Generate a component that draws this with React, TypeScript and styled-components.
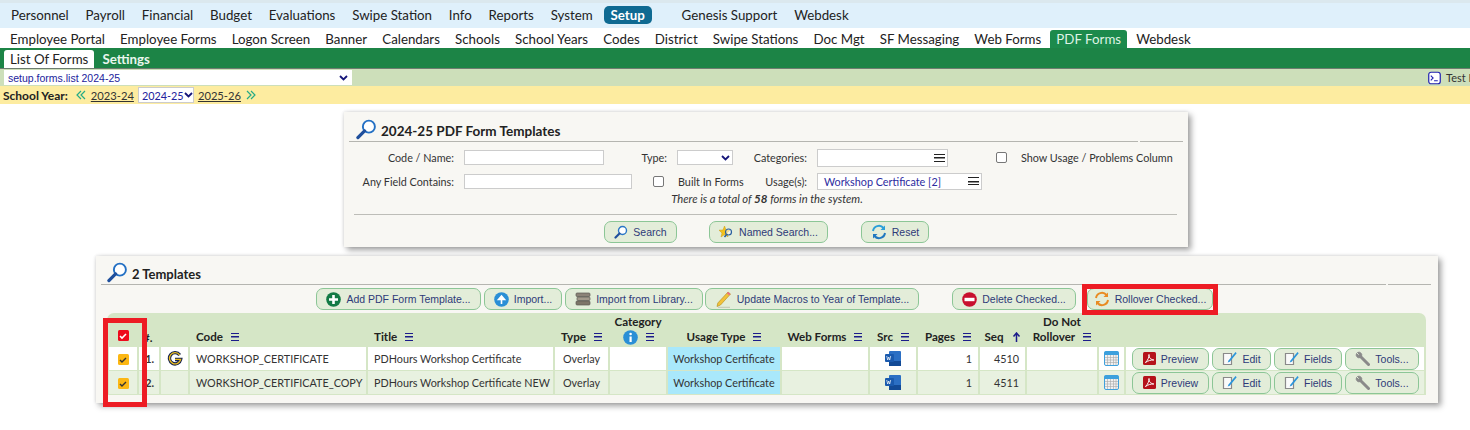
import React from "react";
import styled, { createGlobalStyle } from "styled-components";

const Global = createGlobalStyle`
  html, body { margin: 0; padding: 0; background: #fff; }
  body { font-family: Lato, "Open Sans", sans-serif; color: #222; width: 1470px; height: 430px; overflow: hidden; }
  * { box-sizing: border-box; }
`;

const TopBar = styled.div`
  position: relative; height: 28px; background: #dff0fb; border-top: 3px solid #dbe8ee; overflow: hidden;
  display: flex; align-items: center; padding: 0 0 2px 11px; gap: 16.8px; font-size: 13.3px; color: #222;
`;
const TopItem = styled.span<{ $active?: boolean; $gap?: number }>`
  white-space: nowrap; line-height: 18px;
  ${p => p.$gap ? `margin-left: ${p.$gap}px;` : ""}
  ${p => p.$active ? `background:#0f6a92;color:#fff;border-radius:5px;padding:0 7px;margin:0 -2px 0 -6px;font-weight:700;` : ""}
`;
const DateStub = styled.span`
  position: absolute; right: -15px; top: -11px; font-size: 11px; color: #2b5c8a; white-space: nowrap;
`;
const SubBar = styled.div`
  height: 20px; background: #fff; display: flex; align-items: flex-end; padding-left: 10px; gap: 15.1px; font-size: 13.3px;
`;
const SubItem = styled.span<{ $active?: boolean }>`
  white-space: nowrap; line-height: 18px; height: 18px;
  ${p => p.$active ? `background:#1c8a4c;color:#dff3e5;border-radius:3px 3px 0 0;padding:0 6px;margin:0 -6px;height:18px;` : ""}
`;
const GreenBar = styled.div`
  height: 21px; background: #1c8446; border-bottom: 1px solid #6d7d70; display: flex; align-items: flex-end; padding: 0 0 0 4px; gap: 2px; font-size: 13.3px;
`;
const GreenTab = styled.span<{ $active?: boolean }>`
  height: 18px; line-height: 18px; padding: 0 6px; border-radius: 3px 3px 0 0;
  background: ${p => p.$active ? "#fff" : "transparent"}; color: ${p => p.$active ? "#222" : "#eaf6ee"};
  font-weight: ${p => p.$active ? 400 : 700};
`;
const ContextBar = styled.div`
  height: 17px; background: #cddfba; display: flex; align-items: center; justify-content: space-between; padding-left: 4px;
`;
const ContextSelect = styled.div`
  width: 348px; height: 15px; background: #fff; display: flex; align-items: center; justify-content: space-between;
  padding: 0 4px 0 4px; color: #22229c; font: 10.5px "Liberation Sans", sans-serif;
`;
const TestLink = styled.div`
  display: flex; align-items: center; gap: 5px; font-size: 11px; color: #333; white-space: nowrap; width: 42px; overflow: hidden;
  svg { flex: none; }
`;
const YearBar = styled.div`
  height: 18px; background: #fdeca0; display: flex; align-items: center; padding-left: 3px; font-size: 12px;
`;
const YearLabel = styled.b` font-weight: 700; color: #222; margin-right: 8px; white-space: nowrap; `;
const ChevronBox = styled.span<{ $mx: string }>` display: inline-flex; margin: ${p => p.$mx}; `;
const YearLink = styled.span` text-decoration: underline; font-size: 11.2px; color: #333; white-space: nowrap; `;
const YearSelect = styled.span`
  display: inline-flex; align-items: center; justify-content: space-between; width: 56px; height: 16px; background: #fff; border: 1px solid #ccc;
  color: #22229c; margin: 0 4px; padding: 0 2px 0 3px; font-size: 10.8px; white-space: nowrap;
  svg { flex: none; }
`;

const Panel = styled.section<{ $left: number; $width: number; $top: number; $height: number }>`
  position: relative; margin-left: ${p => p.$left}px; margin-top: ${p => p.$top}px; width: ${p => p.$width}px; height: ${p => p.$height}px;
  background: #f8f7f3; box-shadow: 3px 3px 6px rgba(0,0,0,.38), -1px 0 3px rgba(0,0,0,.06), 0 -1px 3px rgba(0,0,0,.05);
`;
const PanelHead = styled.div<{ $pad: number; $h: number; $mr: number; $ml: number; $fs: number }>`
  position: relative; height: ${p => p.$h}px; padding: 0 0 1px ${p => p.$pad}px; display: flex; align-items: flex-end; gap: 4px;
  font-weight: 700; font-size: ${p => p.$fs}px; color: #222; border-bottom: 1px solid #b5b5b0; margin: 0 ${p => p.$mr}px 0 ${p => p.$ml}px; line-height: 18px;
  &::after { content: ""; position: absolute; right: 43px; bottom: -1px; width: 2px; height: 1px; background: #f8f7f3; }
`;
const FormGrid = styled.div`
  display: grid; grid-template-columns: 120px 179px 34px 56px 84px 179px 1fr; grid-auto-rows: 23.5px; padding: 4px 0 0 0; font-size: 10.8px; color: #333;
  align-items: center;
`;
const FieldLabel = styled.label<{ $pr?: number }>`
  display: flex; justify-content: flex-end; padding-right: ${p => p.$pr ?? 10}px; white-space: nowrap;
`;
const TextBox = styled.div<{ $w: number }>`
  width: ${p => p.$w}px; height: 15px; background: #fff; border: 1px solid #ccc;
`;
const Check = styled.span`
  display: inline-block; width: 11px; height: 11px; border: 1px solid #777; border-radius: 2px; background: #fff; flex: none;
`;
const CheckLabel = styled.span<{ $ml: number; $span?: number }>`
  display: flex; align-items: center; gap: 14px; margin-left: ${p => p.$ml}px; white-space: nowrap;
  ${p => p.$span ? `grid-column: span ${p.$span};` : ""}
`;
const PickBox = styled.div<{ $w: number; $h?: number }>`
  width: ${p => p.$w}px; height: ${p => p.$h ?? 17}px; background: #fff; border: 1px solid #ccc; display: flex; align-items: center; justify-content: space-between;
  padding: 0 2px 0 6px; color: #2c2ca0; white-space: nowrap;
`;
const Burger = styled.span<{ $c?: string; $w?: number }>`
  display: inline-block; width: ${p => p.$w ?? 11}px; height: 8px; flex: none;
  border-top: 1.5px solid ${p => p.$c ?? "#222"}; border-bottom: 1.5px solid ${p => p.$c ?? "#222"};
  background: linear-gradient(${p => p.$c ?? "#222"}, ${p => p.$c ?? "#222"}) center / 100% 1.5px no-repeat;
`;
const TotalLine = styled.div`
  text-align: center; font-style: italic; font-size: 11.2px; color: #333; height: 16px; line-height: 16px; margin: -2px 0 0 2px;
  b { font-weight: 700; font-size: 11.6px; }
`;
const Rule = styled.div` height: 1px; background: #bdbdb8; margin: 7px 11px 0 10px; `;
const ButtonRow = styled.div<{ $pl: number; $mt: number }>`
  display: flex; gap: 2px; padding-left: ${p => p.$pl}px; margin-top: ${p => p.$mt}px; align-items: center;
`;
const Btn = styled.button<{ $w: number; $ml?: number }>`
  width: ${p => p.$w}px; height: 22px; margin-left: ${p => p.$ml ?? 0}px; flex: none;
  display: inline-flex; align-items: center; justify-content: center; gap: 5px; padding: 0 3px; white-space: nowrap;
  background: #e3edd9; border: 1px solid #8cc696; border-radius: 7px; color: #2e3a78;
  font: 10.5px "Liberation Sans", sans-serif;
  svg { flex: none; }
`;
const Frame = styled.div<{ $l: number; $t: number; $w: number; $h: number }>`
  position: absolute; left: ${p => p.$l}px; top: ${p => p.$t}px; width: ${p => p.$w}px; height: ${p => p.$h}px; border: 5px solid #ed1c24; pointer-events: none;
`;
const Table = styled.table`
  table-layout: fixed; width: 1319px; margin: 3px 0 0 11px; border-collapse: separate; border-spacing: 2px 0; background: #d5e6c6; border-radius: 7px 7px 0 0;
  font-size: 10.8px; color: #333;
`;
const Th = styled.th<{ $align?: string; $pl?: number }>`
  height: 34px; vertical-align: bottom; padding: 0 0 2px ${p => p.$pl ?? 0}px; font-size: 11.6px; font-weight: 700; color: #222; line-height: 14px; text-align: ${p => p.$align ?? "center"};
  white-space: nowrap;
`;
const Tr = styled.tr<{ $alt?: boolean }>`
  td { background: ${p => p.$alt ? "#e8f1e0" : "#fff"}; border-bottom: 1px solid #d5e6c6; }
`;
const Td = styled.td<{ $align?: string; $bg?: string; $pad?: number; $strong?: boolean }>`
  height: 24px; padding: 0 ${p => p.$pad ?? 2}px; text-align: ${p => p.$align ?? "left"}; white-space: nowrap; overflow: hidden;
  font-weight: ${p => p.$strong ? 700 : 400};
  ${p => p.$bg ? `&& { background: ${p.$bg}; }` : ""}
  svg { vertical-align: middle; }
`;
const HeadWithBurger = styled.span` display: inline-flex; align-items: center; gap: 8px; vertical-align: bottom; height: 16px; `;
const BtnCell = styled.div` display: flex; gap: 3px; padding-left: 6px; `;
const CheckBoxMark = styled.span<{ $c: string; $mb?: number }>`
  display: inline-flex; width: 11px; height: 11px; border-radius: 1.5px; background: ${p => p.$c}; align-items: center; justify-content: center; vertical-align: middle;
  margin-bottom: ${p => p.$mb ?? 0}px;
`;

const Magnifier = () => (
  <svg width="21" height="21" viewBox="0 0 22 22">
    <circle cx="13.5" cy="8" r="6.3" fill="#fff" stroke="#2470c4" strokeWidth="2" />
    <path d="M9 12.5 2 19.5" stroke="#1f4f9c" strokeWidth="3.4" strokeLinecap="round" />
  </svg>
);
const SmallSearch = () => (
  <svg width="14" height="14" viewBox="0 0 14 14">
    <circle cx="8.5" cy="5.5" r="4" fill="#fff" stroke="#2a76c6" strokeWidth="1.4" />
    <path d="M5.5 8.5 1.5 12.5" stroke="#1f4f9c" strokeWidth="2.2" strokeLinecap="round" />
  </svg>
);
const StarSearch = () => (
  <svg width="15" height="15" viewBox="0 0 15 15">
    <path d="M5.5 1 7 5l4 .2-3 2.6 1 4-3.5-2.2L2 12l1-4L0 5.2 4 5z" fill="#f4c21c" stroke="#c99a10" strokeWidth=".5" />
    <circle cx="9.5" cy="7" r="3" fill="#fff" fillOpacity=".5" stroke="#2a5f9e" strokeWidth="1.2" />
    <path d="M7.5 9.5 5.5 12" stroke="#2a5f9e" strokeWidth="1.6" />
  </svg>
);
const Refresh = ({ c1 = "#2a9fd8", c2 = "#1f78c0" }: { c1?: string; c2?: string }) => (
  <svg width="16" height="16" viewBox="0 0 16 16" fill="none">
    <path d="M2 7a6 6 0 0 1 10.5-3" stroke={c1} strokeWidth="2" />
    <path d="M14 1.5V6H9.5z" fill={c1} />
    <path d="M14 9a6 6 0 0 1-10.5 3" stroke={c2} strokeWidth="2" />
    <path d="M2 14.5V10h4.5z" fill={c2} />
  </svg>
);
const Plus = () => (
  <svg width="15" height="15" viewBox="0 0 15 15">
    <circle cx="7.5" cy="7.5" r="7.3" fill="#137a45" />
    <path d="M7.5 3v9M3 7.5h9" stroke="#fff" strokeWidth="2.6" />
  </svg>
);
const UpArrow = () => (
  <svg width="15" height="15" viewBox="0 0 15 15">
    <circle cx="7.5" cy="7.5" r="7.3" fill="#2a8fd6" />
    <path d="M7.5 12V5M4.5 7.5l3-3.5 3 3.500z" stroke="#fff" strokeWidth="1.6" fill="#fff" />
  </svg>
);
const Books = () => (
  <svg width="16" height="14" viewBox="0 0 16 14">
    <rect x="1" y="1" width="14" height="3.5" rx="1" fill="#8c8378" stroke="#5d5a55" strokeWidth=".7" />
    <rect x="2" y="5" width="13" height="3.5" rx="1" fill="#a39a8c" stroke="#5d5a55" strokeWidth=".7" />
    <rect x="1" y="9" width="14" height="4" rx="1" fill="#7d7568" stroke="#5d5a55" strokeWidth=".7" />
  </svg>
);
const Pencil = () => (
  <svg width="17" height="17" viewBox="0 0 17 17">
    <path d="M13 1l2.5 2-10 11-3.5 1.5.8-3.5z" fill="#f2c23a" stroke="#b08a1a" strokeWidth=".6" />
    <path d="M13 1l2.5 2-1.2 1.3-2.5-2z" fill="#e86a8a" />
    <path d="M3 16.3h12" stroke="#b9b9a8" strokeWidth=".8" />
  </svg>
);
const NoEntry = () => (
  <svg width="15" height="15" viewBox="0 0 15 15">
    <circle cx="7.5" cy="7.5" r="7.3" fill="#c8102e" />
    <rect x="2.5" y="5.8" width="10" height="3.4" fill="#fff" />
  </svg>
);
const PdfIcon = () => (
  <svg width="13" height="13" viewBox="0 0 13 13">
    <rect width="13" height="13" rx="1.5" fill="#b5121b" />
    <path d="M2.5 10.5C5 8 6.5 4.5 6 2.5c-.5 2 1 5 4.8 5.500-2.500-.3-6 .8-8.300 2.500z" fill="none" stroke="#fff" strokeWidth="1" />
  </svg>
);
const EditIcon = () => (
  <svg width="15" height="15" viewBox="0 0 15 15">
    <path d="M1.5 2.5h8v11h-8z" fill="#fafafa" stroke="#8a8a8a" strokeWidth="1.2" />
    <path d="M13.5 1 6.5 9.5l-.8 2 2-.8 7-8.500z" fill="#2a95dc" />
  </svg>
);
const Wrench = () => (
  <svg width="15" height="15" viewBox="0 0 15 15">
    <path d="M13.5 13.5 6 6" stroke="#8a8a8a" strokeWidth="3" strokeLinecap="round" />
    <path d="M6.5 5.5A3 3 0 0 0 2.5 1.5l1.8 1.8-1 1-1.8-1.800a3 3 0 0 0 4 4z" fill="#8a8a8a" stroke="#8a8a8a" />
  </svg>
);
const Calendar = () => (
  <svg width="15" height="15" viewBox="0 0 15 15">
    <rect x=".5" y=".5" width="14" height="14" rx="1.5" fill="#f1f1f1" stroke="#3da0dd" />
    <rect x=".5" y=".5" width="14" height="3.5" fill="#3da0dd" />
    <path d="M1 6.5h13M1 9h13M1 11.5h13M3.5 4v10M6.5 4v10M9.5 4v10M12 4v10" stroke="#a8a8a8" strokeWidth=".6" />
  </svg>
);
const Word = () => (
  <svg width="16" height="15" viewBox="0 0 16 15">
    <rect x="4" y="0" width="12" height="15" rx="1" fill="#2b6fc4" />
    <rect x="4" y="10" width="12" height="5" fill="#124a96" />
    <rect x="0" y="3" width="9" height="8" rx="1" fill="#1a5aae" />
    <path d="M1.7 5l1 4 1-3 1 3 1-4" stroke="#fff" strokeWidth=".7" fill="none" />
  </svg>
);
const GLogo = () => (
  <svg width="16" height="15" viewBox="0 0 16 16" fill="none">
    <path d="M13 4.3A6 6 0 1 0 14 9H8" stroke="#16244f" strokeWidth="3.6" />
    <path d="M13 4.3A6 6 0 1 0 14 9H8" stroke="#edbc1c" strokeWidth="1.4" />
  </svg>
);
const Terminal = () => (
  <svg width="13" height="14" viewBox="0 0 14 14" fill="none">
    <rect x=".8" y=".8" width="12.4" height="12.4" rx="2.5" fill="#fff" stroke="#2222b0" strokeWidth="1.3" />
    <path d="M3 4.5 5.5 7 3 9.5M6.5 10h4" stroke="#2222b0" strokeWidth="1.2" />
  </svg>
);
const Caret = ({ c = "#16167a" }: { c?: string }) => (
  <svg width="9" height="6" viewBox="0 0 9 6" fill="none"><path d="M1 1l3.5 3.5L8 1" stroke={c} strokeWidth="1.8" /></svg>
);
const DoubleChevron = ({ flip }: { flip?: boolean }) => (
  <svg width="10" height="10" viewBox="0 0 10 10" fill="none">
    <path d={flip ? "M1 1l4 4-4 4M5 1l4 4-4 4" : "M5 1 1 5l4 4M9 1 5 5l4 4"} stroke="#25ab86" strokeWidth="1.2" />
  </svg>
);
const Info = () => (
  <svg width="15" height="15" viewBox="0 0 15 15">
    <circle cx="7.5" cy="7.5" r="7.3" fill="#2a8fd6" />
    <rect x="6.5" y="6.5" width="2.2" height="5.5" fill="#fff" />
    <circle cx="7.6" cy="4" r="1.3" fill="#fff" />
  </svg>
);
const SortUp = () => (
  <svg width="9" height="10" viewBox="0 0 9 10" fill="none"><path d="M4.5 10V2M1.5 4.5l3-3.500 3 3.500" stroke="#1c1c8a" strokeWidth="1.5" /></svg>
);
const HB = () => <Burger $c="#1c1c8a" $w={8} />;

const widths = [28, 20, 27, 176, 185, 53, 56, 112, 86, 46, 60, 45, 70, 25, 298];
const rows = [
  { n: "1.", code: "WORKSHOP_CERTIFICATE", title: "PDHours Workshop Certificate", seq: "4510", logo: true },
  { n: "2.", code: "WORKSHOP_CERTIFICATE_COPY", title: "PDHours Workshop Certificate NEW", seq: "4511", logo: false },
];
const topItems = ["Personnel", "Payroll", "Financial", "Budget", "Evaluations", "Swipe Station", "Info", "Reports", "System"];
const subItems = ["Employee Portal", "Employee Forms", "Logon Screen", "Banner", "Calendars", "Schools", "School Years", "Codes", "District", "Swipe Stations", "Doc Mgt", "SF Messaging", "Web Forms"];

export default function App() {
  return (
    <>
      <Global />
      <TopBar>
        {topItems.map(t => <TopItem key={t}>{t}</TopItem>)}
        <TopItem $active>Setup</TopItem>
        <TopItem $gap={15}>Genesis Support</TopItem>
        <TopItem>Webdesk</TopItem>
        <DateStub>6/16/2025</DateStub>
      </TopBar>
      <SubBar>
        {subItems.map(t => <SubItem key={t}>{t}</SubItem>)}
        <SubItem $active>PDF Forms</SubItem>
        <SubItem>Webdesk</SubItem>
      </SubBar>
      <GreenBar>
        <GreenTab $active>List Of Forms</GreenTab>
        <GreenTab>Settings</GreenTab>
      </GreenBar>
      <ContextBar>
        <ContextSelect>setup.forms.list 2024-25<Caret /></ContextSelect>
        <TestLink><Terminal />Test Help</TestLink>
      </ContextBar>
      <YearBar>
        <YearLabel>School Year:</YearLabel>
        <ChevronBox $mx="0 5px 0 0"><DoubleChevron /></ChevronBox>
        <YearLink>2023-24</YearLink>
        <YearSelect>2024-25<Caret /></YearSelect>
        <YearLink>2025-26</YearLink>
        <ChevronBox $mx="0 0 0 5px"><DoubleChevron flip /></ChevronBox>
      </YearBar>

      <Panel $left={344} $width={844} $top={8} $height={135}>
        <PanelHead $pad={7} $h={30} $ml={5} $mr={5} $fs={13.5}><Magnifier />2024-25 PDF Form Templates</PanelHead>
        <FormGrid>
          <FieldLabel>Code / Name:</FieldLabel>
          <TextBox $w={140} />
          <FieldLabel>Type:</FieldLabel>
          <PickBox $w={56} $h={15}><span /><Caret /></PickBox>
          <FieldLabel>Categories:</FieldLabel>
          <PickBox $w={131} $h={18}><span /><Burger /></PickBox>
          <CheckLabel $ml={0}><Check />Show Usage / Problems Column</CheckLabel>
          <FieldLabel>Any Field Contains:</FieldLabel>
          <TextBox $w={168} />
          <CheckLabel $ml={10} $span={2}><Check />Built In Forms</CheckLabel>
          <FieldLabel>Usage(s):</FieldLabel>
          <PickBox $w={165}>Workshop Certificate [2]<Burger /></PickBox>
          <span />
        </FormGrid>
        <TotalLine>There is a total of <b>58</b> forms in the system.</TotalLine>
        <Rule />
        <ButtonRow $pl={260} $mt={6}>
          <Btn $w={73}><SmallSearch />Search</Btn>
          <Btn $w={119} $ml={30}><StarSearch />Named Search...</Btn>
          <Btn $w={68} $ml={31}><Refresh />Reset</Btn>
        </ButtonRow>
      </Panel>

      <Panel $left={96} $width={1342} $top={9} $height={147}>
        <PanelHead $pad={6} $h={29} $ml={5} $mr={7} $fs={13}><Magnifier />2 Templates</PanelHead>
        <ButtonRow $pl={220} $mt={3}>
          <Btn $w={165}><Plus />Add PDF Form Template...</Btn>
          <Btn $w={78} $ml={1}><UpArrow />Import...</Btn>
          <Btn $w={138} $ml={1}><Books />Import from Library...</Btn>
          <Btn $w={214}><Pencil />Update Macros to Year of Template...</Btn>
          <Btn $w={124} $ml={31}><NoEntry />Delete Checked...</Btn>
          <Btn $w={126} $ml={9}><Refresh c1="#e98b22" c2="#e98b22" />Rollover Checked...</Btn>
        </ButtonRow>
        <Table>
          <colgroup>{widths.map((w, i) => <col key={i} width={w} />)}</colgroup>
          <thead>
            <tr>
              <Th><CheckBoxMark $c="#ee0a1c" $mb={4}><svg width="8" height="8" viewBox="0 0 8 8" fill="none"><path d="M1 4l2 2 4-4" stroke="#fff" strokeWidth="1.6" /></svg></CheckBoxMark></Th>
              <Th $align="left" $pl={4}>#.</Th>
              <Th />
              <Th $align="left" $pl={6}><HeadWithBurger>Code <HB /></HeadWithBurger></Th>
              <Th $align="left" $pl={6}><HeadWithBurger>Title <HB /></HeadWithBurger></Th>
              <Th><HeadWithBurger>Type <HB /></HeadWithBurger></Th>
              <Th>Category<br /><HeadWithBurger><Info /> <HB /></HeadWithBurger></Th>
              <Th><HeadWithBurger>Usage Type <HB /></HeadWithBurger></Th>
              <Th><HeadWithBurger>Web Forms <HB /></HeadWithBurger></Th>
              <Th><HeadWithBurger>Src <HB /></HeadWithBurger></Th>
              <Th><HeadWithBurger>Pages <HB /></HeadWithBurger></Th>
              <Th><HeadWithBurger>Seq <SortUp /></HeadWithBurger></Th>
              <Th>Do Not<br /><HeadWithBurger>Rollover <HB /></HeadWithBurger></Th>
              <Th />
              <Th />
            </tr>
          </thead>
          <tbody>
            {rows.map((r, i) => (
              <Tr key={r.n} $alt={i === 1}>
                <Td $align="center"><CheckBoxMark $c="#fcb713"><svg width="8" height="8" viewBox="0 0 8 8" fill="none"><path d="M1 4l2 2 4-4" stroke="#333" strokeWidth="1.4" /></svg></CheckBoxMark></Td>
                <Td $align="right" $pad={5} $strong>{r.n}</Td>
                <Td $align="center">{r.logo && <GLogo />}</Td>
                <Td $pad={6}>{r.code}</Td>
                <Td $pad={6}>{r.title}</Td>
                <Td $align="center">Overlay</Td>
                <Td />
                <Td $align="center" $bg="#a9e8fb">Workshop Certificate</Td>
                <Td />
                <Td $align="center"><Word /></Td>
                <Td $align="right" $pad={6}>1</Td>
                <Td $align="right" $pad={6}>{r.seq}</Td>
                <Td />
                <Td $align="center"><Calendar /></Td>
                <Td $pad={0}>
                  <BtnCell>
                    <Btn $w={77}><PdfIcon />Preview</Btn>
                    <Btn $w={59}><EditIcon />Edit</Btn>
                    <Btn $w={68}><EditIcon />Fields</Btn>
                    <Btn $w={74}><Wrench />Tools...</Btn>
                  </BtnCell>
                </Td>
              </Tr>
            ))}
          </tbody>
        </Table>
        <Frame $l={7} $t={62} $w={44} $h={89} />
        <Frame $l={986} $t={28} $w={136} $h={31} />
      </Panel>
    </>
  );
}
